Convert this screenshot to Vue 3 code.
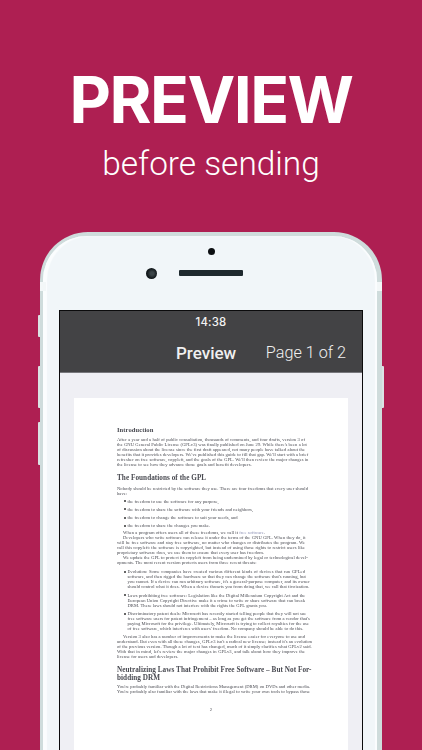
<script setup>
const intro = [
  'After a year and a half of public consultation, thousands of comments, and four drafts, version 3 of',
  "the GNU General Public License (GPLv3) was finally published on June 29. While there's been a lot",
  'of discussion about the license since the first draft appeared, not many people have talked about the',
  "benefits that it provides developers. We've published this guide to fill that gap. We'll start with a brief",
  "refresher on free software, copyleft, and the goals of the GPL. We'll then review the major changes in"
]
const freedoms = [
  'the freedom to use the software for any purpose,',
  'the freedom to share the software with your friends and neighbors,',
  'the freedom to change the software to suit your needs, and',
  'the freedom to share the changes you make.'
]
const mid = [
  'will be free software and stay free software, no matter who changes or distributes the program. We',
  'call this copyleft: the software is copyrighted, but instead of using those rights to restrict users like'
]
const threats = [
  [
    'Evolution: Some companies have created various different kinds of devices that run GPLed',
    "software, and then rigged the hardware so that they can change the software that's running, but",
    "you cannot. If a device can run arbitrary software, it's a general-purpose computer, and its owner"
  ],
  [
    'Laws prohibiting free software: Legislation like the Digital Millennium Copyright Act and the',
    'European Union Copyright Directive make it a crime to write or share software that can break'
  ],
  [
    'Discriminatory patent deals: Microsoft has recently started telling people that they will not sue',
    'free software users for patent infringement – as long as you get the software from a vendor that\'s',
    'paying Microsoft for the privilege. Ultimately, Microsoft is trying to collect royalties for the use'
  ]
]
const threatEnds = [
  'should control what it does. When a device thwarts you from doing that, we call that tivoization.',
  'DRM. These laws should not interfere with the rights the GPL grants you.',
  "of free software, which interferes with users' freedom. No company should be able to do this."
]
const version = [
  'understand. But even with all these changes, GPLv3 isn\'t a radical new license; instead it\'s an evolution',
  'of the previous version. Though a lot of text has changed, much of it simply clarifies what GPLv2 said.',
  "With that in mind, let's review the major changes in GPLv3, and talk about how they improve the"
]
</script>

<template>
  <div class="page">
    <h1 class="title">PREVIEW</h1>
    <p class="subtitle">before sending</p>

    <div class="phone">
      <span class="band band-l"></span>
      <span class="band band-r"></span>
      <span class="btn btn-l1"></span>
      <span class="btn btn-l2"></span>
      <span class="btn btn-l3"></span>
      <span class="btn btn-r1"></span>

      <div class="face">
        <div class="sensors">
          <span class="dot"></span>
          <div class="cam-row">
            <span class="camera"></span>
            <span class="speaker"></span>
          </div>
        </div>

        <div class="screen">
          <div class="status">14:38</div>
          <div class="nav">
            <span class="nav-title">Preview</span>
            <span class="nav-page">Page 1 of 2</span>
          </div>
          <div class="viewer">
            <div class="paper">
              <div class="h-intro">Introduction</div>
              <div class="group g-intro">
                <div v-for="l in intro" :key="l" class="j">{{ l }}</div>
                <div class="l">the license to see how they advance those goals and benefit developers.</div>
              </div>

              <div class="h2 g-found">The Foundations of the GPL</div>
              <div class="group g-nobody">
                <div class="j">Nobody should be restricted by the software they use. There are four freedoms that every user should</div>
                <div class="l">have:</div>
              </div>
              <ul class="free">
                <li v-for="f in freedoms" :key="f" class="item l">{{ f }}</li>
              </ul>

              <div class="group g-when">
                <div class="l in">When a program offers users all of these freedoms, we call it <span class="link">free software</span>.</div>
                <div class="j in">Developers who write software can release it under the terms of the GNU GPL. When they do, it</div>
                <div v-for="l in mid" :key="l" class="j">{{ l }}</div>
                <div class="l">proprietary software does, we use them to ensure that every user has freedom.</div>
                <div class="j in">We update the GPL to protect its copyleft from being undermined by legal or technological devel-</div>
                <div class="l">opments. The most recent version protects users from three recent threats:</div>
              </div>

              <ul class="threats">
                <li v-for="(t, i) in threats" :key="i" class="item threat">
                  <div v-for="l in t" :key="l" class="j">{{ l }}</div>
                  <div class="l">{{ threatEnds[i] }}</div>
                </li>
              </ul>

              <div class="group g-version">
                <div class="j in">Version 3 also has a number of improvements to make the license easier for everyone to use and</div>
                <div v-for="l in version" :key="l" class="j">{{ l }}</div>
                <div class="l">license for users and developers.</div>
              </div>

              <div class="h2 g-neutral">
                <div class="j">Neutralizing Laws That Prohibit Free Software – But Not For-</div>
                <div>bidding DRM</div>
              </div>
              <div class="group g-you">
                <div class="j">You're probably familiar with the Digital Restrictions Management (DRM) on DVDs and other media.</div>
                <div class="j">You're probably also familiar with the laws that make it illegal to write your own tools to bypass those</div>
              </div>
              <div class="pageno">2</div>
            </div>
          </div>
        </div>
      </div>
    </div>
  </div>
</template>

<style scoped>
.page {
  width: 422px;
  height: 750px;
  overflow: hidden;
  background: #ae1f52;
  display: flex;
  flex-direction: column;
  align-items: center;
  font-family: Inter, "Open Sans", sans-serif;
  color: #fff;
}
.title {
  margin: 60px 0 0;
  font-size: 64px;
  line-height: 80px;
  font-weight: 700;
  letter-spacing: -1.5px;
}
.subtitle {
  margin: 2px 0 0;
  font-family: Roboto, Inter, sans-serif;
  font-size: 33.4px;
  line-height: 44px;
  font-weight: 300;
}
.phone {
  position: relative;
  margin-top: 46px;
  width: 342px;
  height: 560px;
  flex: none;
  box-sizing: border-box;
  padding: 4px 5px 0 3px;
  border-radius: 48px 48px 0 0;
  background: #cfdcdc;
}
.band {
  position: absolute;
  top: 50px;
  height: 9px;
  background: #f3f7f8;
}
.band-l { left: 0; width: 6px; }
.band-r { right: 0; width: 5px; }
.btn {
  position: absolute;
  width: 2px;
  background: #dbe3e4;
  border-radius: 1px 0 0 1px;
}
.btn-l1 { left: -2px; top: 83px; height: 22px; }
.btn-l2 { left: -2px; top: 134px; height: 42px; }
.btn-l3 { left: -2px; top: 190px; height: 43px; }
.btn-r1 { right: -2px; top: 134px; height: 42px; border-radius: 0 1px 1px 0; }
.face {
  height: 100%;
  box-sizing: border-box;
  padding: 0 14px 0 16px;
  border-radius: 44px 44px 0 0;
  background: #f1f6f9;
  box-shadow: inset 4px 0 1px #fbfdfe, inset -2px 0 1px #fbfdfe;
}
.sensors {
  height: 74px;
  display: flex;
  flex-direction: column;
  align-items: center;
  padding-top: 12px;
  box-sizing: border-box;
}
.dot {
  width: 7px;
  height: 7px;
  border-radius: 50%;
  background: #0c0f12;
}
.cam-row {
  position: relative;
  margin-top: 15px;
  display: flex;
  justify-content: center;
}
.camera {
  position: absolute;
  left: -33px;
  top: -2.5px;
  width: 11px;
  height: 11px;
  border-radius: 50%;
  background: radial-gradient(circle at 55% 50%, #3c4548 0 20%, #12181b 60%);
}
.speaker {
  width: 64px;
  height: 6px;
  border-radius: 1px;
  background: #1e292e;
}
.screen {
  height: 480px;
  box-sizing: border-box;
  border: 1px solid #0b0b0c;
  border-bottom: 0;
  display: flex;
  flex-direction: column;
  background: #434345;
}
.status {
  height: 22px;
  font-size: 11.4px;
  line-height: 22px;
  text-align: center;
  font-weight: 500;
  color: #f2f2f2;
  letter-spacing: 0.2px;
}
.nav {
  height: 39px;
  position: relative;
  display: flex;
  justify-content: flex-end;
  align-items: center;
  padding-right: 16px;
  border-bottom: 1px solid #77777c;
  box-sizing: content-box;
  font-family: Roboto, Inter, sans-serif;
}
.nav-title {
  position: absolute;
  left: 116px;
  font-size: 17px;
  font-weight: 500;
  color: #f0f0f0;
}
.nav-page {
  font-size: 16.2px;
  font-weight: 300;
  color: #f0f0f0;
}
.viewer {
  flex: 1;
  min-height: 0;
  background: #efeff4;
  padding: 25px 14px 0 14px;
}
.paper {
  height: 100%;
  box-sizing: border-box;
  background: #fff;
  padding: 28px 43px 0 43px;
  font-family: "Liberation Serif", serif;
  font-size: 4.6px;
  letter-spacing: 0.05px;
  line-height: 5px;
  color: #4a4b52;
  overflow: hidden;
  filter: blur(0.3px);
}
.j {
  text-align: justify;
  text-align-last: justify;
  white-space: nowrap;
}
.l { white-space: nowrap; }
.in { padding-left: 6px; }
.link { color: #8b90b4; }
.h-intro {
  font-size: 6.6px;
  line-height: 8px;
  font-weight: 700;
}
.h2 {
  font-size: 7.2px;
  line-height: 8px;
  font-weight: 700;
}
.g-intro { margin-top: 2.5px; }
.g-found { margin-top: 7.5px; }
.g-nobody { margin-top: 3.5px; }
.free, .threats {
  list-style: none;
  margin: 3px 0 0;
  padding: 0;
}
.free {
  display: flex;
  flex-direction: column;
  gap: 3.33px;
}
.item {
  position: relative;
  padding-left: 10.5px;
}
.item::before {
  content: "";
  position: absolute;
  left: 6.5px;
  top: 1.5px;
  width: 2px;
  height: 2px;
  border-radius: 50%;
  background: #333;
}
.g-when { margin-top: 2px; }
.threats {
  margin-top: 4px;
  display: flex;
  flex-direction: column;
  gap: 3.5px;
}
.g-version { margin-top: 3px; }
.g-neutral { margin-top: 6.5px; }
.g-you { margin-top: 2.5px; }
.pageno {
  margin-top: 13px;
  text-align: center;
}
</style>
